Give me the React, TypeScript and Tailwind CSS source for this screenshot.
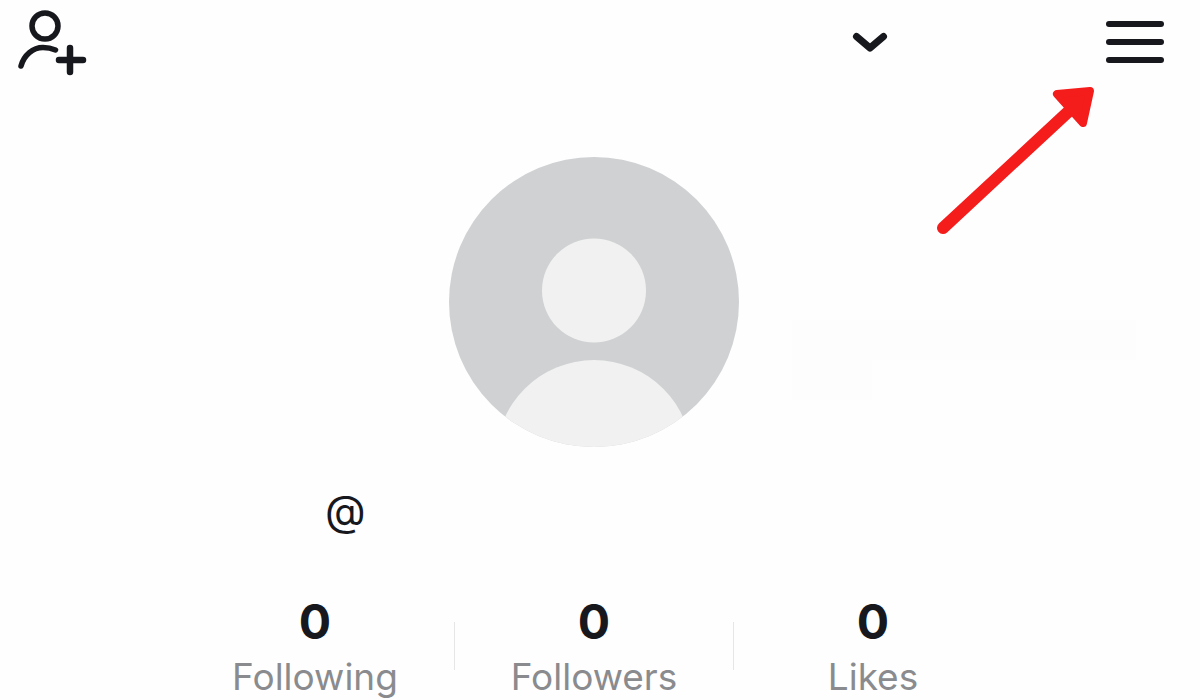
import React from 'react';

interface Stat {
  value: string;
  label: string;
}

const stats: Stat[] = [
  { value: '0', label: 'Following' },
  { value: '0', label: 'Followers' },
  { value: '0', label: 'Likes' },
];

function AddUserIcon() {
  return (
    <svg className="w-[72px] h-[68px]" viewBox="16 10 72 68" fill="none" stroke="#17181d" strokeLinecap="round">
      <circle cx="45" cy="26" r="13" strokeWidth="5.5" />
      <path d="M21 66C24 55 33 47.5 43 47.5C48 47.5 52 48.5 55.5 50" strokeWidth="5.5" />
      <path d="M59 60H83M70 48V72" strokeWidth="6.5" />
    </svg>
  );
}

function ChevronIcon() {
  return (
    <svg className="w-10 h-7" viewBox="850 28 40 28" fill="none" stroke="#17181d" strokeWidth="7" strokeLinecap="round" strokeLinejoin="round">
      <path d="M856.5 36.5L870 48L883.5 36.5" />
    </svg>
  );
}

function Avatar() {
  return (
    <svg className="w-[290px] h-[290px] ml-[449px]" viewBox="0 0 290 290">
      <defs>
        <clipPath id="avatar-clip">
          <circle cx="145" cy="145" r="145" />
        </clipPath>
      </defs>
      <circle cx="145" cy="145" r="145" fill="#cfd1d2" />
      <circle cx="145" cy="133.5" r="52" fill="#f1f1f1" />
      <circle cx="145" cy="301" r="98" fill="#f1f1f1" clipPath="url(#avatar-clip)" />
    </svg>
  );
}

export default function App() {
  return (
    <div className="relative w-[1200px] h-[700px] overflow-hidden bg-[#fefefe] font-['Inter',sans-serif]">
      <div className="flex items-start h-[157px] pl-4 pr-9 pt-2.5">
        <AddUserIcon />
        <div className="ml-auto mr-[216px] mt-[18px]">
          <ChevronIcon />
        </div>
        <div className="flex flex-col gap-3 w-[58px] mt-[11px]">
          <div className="h-1.5 rounded-sm bg-[#17181d]" />
          <div className="h-1.5 rounded-sm bg-[#17181d]" />
          <div className="h-1.5 rounded-sm bg-[#17181d]" />
        </div>
      </div>

      <Avatar />

      <div className="pl-[325px] mt-[41px] text-[42px] leading-[46px] text-[#17181d]">@</div>

      <div className="flex ml-[176px] mt-[55px]">
        {stats.map((stat, i) => (
          <React.Fragment key={stat.label}>
            {i > 0 && <div className="w-px h-12 mt-[33px] bg-[#e6e6e6]" />}
            <div className="w-[278px] text-center">
              <div className="text-[48px] leading-[65px] font-bold text-[#17181d]">{stat.value}</div>
              <div className="text-[37px] leading-[46px] text-[#8a8b8e]">{stat.label}</div>
            </div>
          </React.Fragment>
        ))}
      </div>

      {/* annotation on top of the screenshot */}
      <svg className="absolute left-0 top-0 w-[1200px] h-[700px] pointer-events-none" viewBox="0 0 1200 700" fill="none">
        <path d="M943 228L1068 112" stroke="#f51c1c" strokeWidth="12" strokeLinecap="round" />
        <path d="M1057 94L1090 91L1083 123Z" fill="#f51c1c" stroke="#f51c1c" strokeWidth="8" strokeLinejoin="round" />
      </svg>

      {/* blurred-out name */}
      <div className="absolute left-[792px] top-[320px] w-[344px] h-10 bg-[#fdfdfd]" />
      <div className="absolute left-[792px] top-[360px] w-20 h-10 bg-[#fdfdfd]" />
    </div>
  );
}
